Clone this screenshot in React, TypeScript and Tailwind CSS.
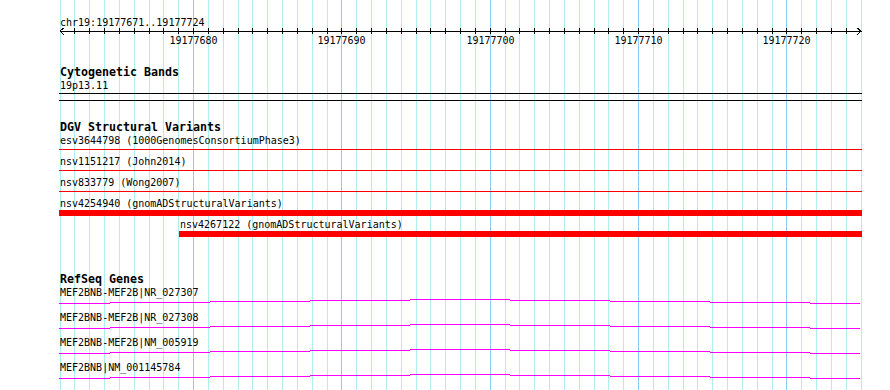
const START = 19177671
const END = 19177724
const LEFT = 60
const SPAN = 801
const BASES = END - START + 1

const gridX = (k: number) => Math.floor(LEFT + (k * SPAN) / BASES)
const isMajor = (k: number) => (START + k) % 10 === 0

const dgv = [
  { name: 'esv3644798 (1000GenomesConsortiumPhase3)', start: 59, bar: false },
  { name: 'nsv1151217 (John2014)', start: 59, bar: false },
  { name: 'nsv833779 (Wong2007)', start: 59, bar: false },
  { name: 'nsv4254940 (gnomADStructuralVariants)', start: 59, bar: true },
  { name: 'nsv4267122 (gnomADStructuralVariants)', start: 179, bar: true },
]

const genes = [
  'MEF2BNB-MEF2B|NR_027307',
  'MEF2BNB-MEF2B|NR_027308',
  'MEF2BNB-MEF2B|NM_005919',
  'MEF2BNB|NM_001145784',
]

// intron line drawn as a shallow hat
const steps = [
  [59, 110, 4], [110, 210, 3], [210, 310, 2], [310, 410, 1], [410, 510, 0],
  [510, 610, 1], [610, 710, 2], [710, 810, 3], [810, 860, 4],
]

function Grid() {
  return (
    <svg className="absolute inset-0 pointer-events-none" width={890} height={390} shapeRendering="crispEdges">
      {Array.from({ length: BASES + 1 }, (_, k) => (
        <rect key={k} x={gridX(k)} y={0} width={1} height={390} fill={isMajor(k) ? '#87cefa' : '#aeeeee'} />
      ))}
    </svg>
  )
}

function Ruler() {
  return (
    <div>
      <div className="mt-[16px] h-[13px] pl-[60px]">chr19:{START}..{END}</div>
      <svg className="block mt-[-1px] overflow-visible" width={890} height={6} shapeRendering="crispEdges">
        <rect x={60} y={3} width={802} height={1} fill="#000" />
        {Array.from({ length: BASES - 1 }, (_, i) => (
          <rect key={i} x={gridX(i + 1)} y={0} width={1} height={6} fill="#000" />
        ))}
        <polyline points="64,0 60,3 64,7" fill="none" stroke="#000" strokeWidth={1} />
        <polyline points="857,0 861,3 857,7" fill="none" stroke="#000" strokeWidth={1} />
      </svg>
      <div className="relative h-[13px]">
        {Array.from({ length: BASES }, (_, k) => k).filter(isMajor).map((k) => (
          <span key={k} className="absolute top-0 -translate-x-1/2" style={{ left: gridX(k) + 0.5 }}>
            {START + k}
          </span>
        ))}
      </div>
    </div>
  )
}

function Heading({ children, className }: { children: React.ReactNode; className: string }) {
  return <div className={`h-[13px] pl-[60px] text-[11.63px] font-bold ${className}`}>{children}</div>
}

function Hat() {
  return (
    <svg className="block ml-[59px]" width={803} height={5} shapeRendering="crispEdges">
      {steps.map(([a, b, y], i) => (
        <rect key={i} x={a - 59} y={y} width={b - a} height={1} fill="#ff00ff" />
      ))}
    </svg>
  )
}

export default function App() {
  return (
    <div className="relative w-[890px] h-[390px] overflow-hidden bg-white text-black text-[10px] leading-[13px] font-['DejaVu_Sans_Mono',monospace]">
      <Grid />

      <div className="relative flex flex-col">
        <Ruler />

        {/* Cytogenetic Bands */}
        <Heading className="mt-[19px]">Cytogenetic Bands</Heading>
        <div className="h-[13px] pl-[60px]">19p13.11</div>
        <div className="mt-[1px] ml-[59px] w-[803px] h-[8px] border-y border-black" />

        {/* DGV Structural Variants */}
        <Heading className="mt-[20px]">DGV Structural Variants</Heading>
        {dgv.map((row) => (
          <div key={row.name} className={row.bar ? 'mb-[2px]' : 'mb-[5px]'}>
            <div className="h-[13px]" style={{ paddingLeft: row.start + 1 }}>{row.name}</div>
            {row.bar ? (
              <div className="h-[6px] bg-[#ff0000]" style={{ marginLeft: row.start, width: 862 - row.start }} />
            ) : (
              <div className="mt-[2px] h-px bg-[#ff0000]" style={{ marginLeft: row.start, width: 862 - row.start }} />
            )}
          </div>
        ))}

        {/* RefSeq Genes */}
        <Heading className="mt-[34px]">RefSeq Genes</Heading>
        {genes.map((g) => (
          <div key={g} className="mb-[7px]">
            <div className="h-[13px] pl-[60px]">{g}</div>
            <Hat />
          </div>
        ))}
      </div>
    </div>
  )
}
